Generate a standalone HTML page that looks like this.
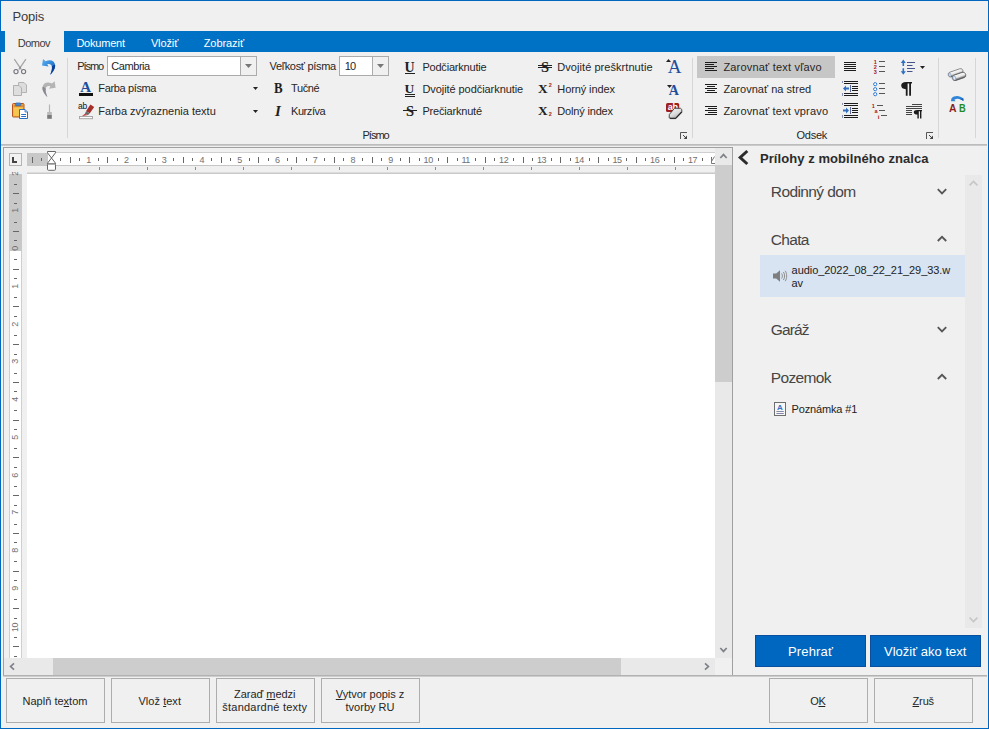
<!DOCTYPE html>
<html lang="sk"><head><meta charset="utf-8"><title>Popis</title>
<style>
html,body{margin:0;padding:0;}
body{width:989px;height:729px;overflow:hidden;background:#f0f0f0;font-family:'Liberation Sans', sans-serif;color:#262626;position:relative;}
#win div,#win span.t,#win svg{position:absolute;box-sizing:border-box;}
#win{position:absolute;left:0;top:0;width:989px;height:729px;overflow:hidden;}
span.t{white-space:nowrap;}
svg{overflow:visible;}
.btn{border:1px solid #adadad;background:#f0f0f0;}
u{text-decoration:underline;text-underline-offset:1px;}
</style></head><body><div id="win">
<div style="left:0px;top:0px;width:989px;height:729px;border:1px solid #0067c0;background:#f0f0f0;"></div>
<span class="t " id="t0" style="left:12.5px;top:9.600000000000001px;font-size:13px;line-height:13px;color:#3b3b3b;letter-spacing:-0.206px;">Popis</span>
<div style="left:0px;top:31px;width:989px;height:21px;background:#0072c6;"></div>
<div style="left:5px;top:31px;width:59px;height:21px;background:#f0f0f0;"></div>
<span class="t " id="t1" style="left:17.8px;top:38px;font-size:11px;line-height:11px;color:#3b3b3b;letter-spacing:-0.528px;">Domov</span>
<span class="t " id="t2" style="left:76.4px;top:38px;font-size:11px;line-height:11px;color:#fff;letter-spacing:-0.217px;">Dokument</span>
<span class="t " id="t3" style="left:150.9px;top:38px;font-size:11px;line-height:11px;color:#fff;letter-spacing:-0.111px;">Vložiť</span>
<span class="t " id="t4" style="left:203.7px;top:38px;font-size:11px;line-height:11px;color:#fff;letter-spacing:-0.064px;">Zobraziť</span>
<div style="left:1px;top:144px;width:986px;height:1px;background:#bcbcbc;"></div>
<div style="left:1px;top:145px;width:986px;height:1px;background:#cacaca;"></div>
<div style="left:67px;top:58px;width:1px;height:80px;background:#d6d6d6;"></div>
<div style="left:692px;top:58px;width:1px;height:80px;background:#d6d6d6;"></div>
<div style="left:938px;top:58px;width:1px;height:80px;background:#d6d6d6;"></div>
<div style="left:975px;top:58px;width:1px;height:80px;background:#d6d6d6;"></div>
<svg style="left:12px;top:58px" width="16" height="16" viewBox="0 0 16 16">
<path d="M2.3 1.2L9.4 11.6M13.9 1.2L6.8 11.6" stroke="#a4a4a4" stroke-width="1.2" fill="none"/>
<circle cx="4" cy="13.6" r="2.1" fill="none" stroke="#74747e" stroke-width="1.1"/>
<circle cx="11.6" cy="13.6" r="2.1" fill="none" stroke="#74747e" stroke-width="1.1"/>
<circle cx="8.1" cy="9.6" r=".9" fill="#888"/></svg>
<svg style="left:40px;top:58px" width="17" height="17" viewBox="0 0 17 17"><defs><linearGradient id="ung" x1="0" y1="0" x2="1" y2="1"><stop offset="0" stop-color="#5fb0ee"/><stop offset=".5" stop-color="#2f86d8"/><stop offset="1" stop-color="#0d4aa0"/></linearGradient></defs>
<path d="M3 1L2 7.5L8.6 8.6L7.2 6.3C9.5 5.3 11.5 6.3 11.9 8.6C12.3 11 11.4 14 10.2 16.8C13.2 14 15.5 10.4 15.1 7C14.6 3 10.6 1.1 5.6 3.3Z" fill="url(#ung)"/><path d="M11.9 8.6C12.3 11 11.4 14 10.2 16.8C13.2 14 15.5 10.4 15.1 7C14.3 6.6 12.8 7.2 11.9 8.6Z" fill="#0b3f98"/></svg>
<svg style="left:12px;top:80px" width="16" height="16" viewBox="0 0 16 16">
<path d="M6.5 2.5H12L14.5 5V12.5H6.5Z" fill="#dcdcdc" stroke="#b4b4b4"/>
<path d="M1.5 5.5H7L9.5 8V15.5H1.5Z" fill="#dedede" stroke="#b0b0b0"/></svg>
<svg style="left:40px;top:80px" width="18" height="17" viewBox="0 0 18 17"><g transform="translate(17.6 .2) scale(-1 1)"><path d="M3 1L2 7.5L8.6 8.6L7.2 6.3C9.5 5.3 11.5 6.3 11.9 8.6C12.3 11 11.4 14 10.2 16.8C13.2 14 15.5 10.4 15.1 7C14.6 3 10.6 1.1 5.6 3.3Z" fill="#b4b4b4"/><path d="M11.9 8.6C12.3 11 11.4 14 10.2 16.8C13.2 14 15.5 10.4 15.1 7C14.3 6.6 12.8 7.2 11.9 8.6Z" fill="#8a8a94"/></g></svg>
<svg style="left:12px;top:102px" width="17" height="17" viewBox="0 0 17 17">
<rect x=".5" y="1.5" width="11.5" height="13.5" rx="1" fill="#f3b63a" stroke="#b5541e"/>
<rect x="1.6" y="2.6" width="9.3" height="2.6" fill="#d98a3a"/>
<rect x="2" y="5.4" width="8.5" height="8.4" fill="#f6c750"/>
<rect x="3.6" y=".9" width="5.2" height="2.8" rx=".8" fill="#4b86c9" stroke="#2a5fa5" stroke-width=".6"/>
<path d="M7.5 7.5H13L15.5 10V16.5H7.5Z" fill="#fff" stroke="#2b6fc0"/>
<path d="M13 7.5V10H15.5" fill="#cfe0f6" stroke="#2b6fc0" stroke-width=".8"/>
<path d="M9.2 12.5H14M9.2 14.5H14" stroke="#2b6fc0"/></svg>
<svg style="left:40px;top:102px" width="16" height="17" viewBox="0 0 16 17">
<path d="M9.5 2.5V10" stroke="#b5b5b5" stroke-width="1.2"/>
<rect x="7.2" y="10" width="4.6" height="3" fill="#b9b9b9"/>
<rect x="7.2" y="13" width="4.6" height="3.8" fill="#7a7a7a"/></svg>
<span class="t " id="t5" style="left:77.2px;top:61px;font-size:11px;line-height:11px;letter-spacing:-1.035px;">Písmo</span>
<div style="left:107px;top:56px;width:150px;height:20px;border:1px solid #ababab;background:#fff;"></div>
<div style="left:240px;top:57px;width:16px;height:18px;border-left:1px solid #ababab;background:#f0f0f0;"></div>
<svg style="left:245px;top:64px" width="7" height="4" viewBox="0 0 7 4"><path d="M0 0H7L3.5 4Z" fill="#777"/></svg>
<span class="t " id="t6" style="left:111.3px;top:61px;font-size:11px;line-height:11px;letter-spacing:-0.440px;">Cambria</span>
<span class="t " id="t7" style="left:269.5px;top:61px;font-size:11px;line-height:11px;letter-spacing:-0.309px;">Veľkosť písma</span>
<div style="left:339px;top:56px;width:50px;height:20px;border:1px solid #ababab;background:#fff;"></div>
<div style="left:372px;top:57px;width:16px;height:18px;border-left:1px solid #ababab;background:#f0f0f0;"></div>
<svg style="left:377px;top:64px" width="7" height="4" viewBox="0 0 7 4"><path d="M0 0H7L3.5 4Z" fill="#777"/></svg>
<span class="t " id="t8" style="left:344.8px;top:61px;font-size:11px;line-height:11px;letter-spacing:-0.969px;">10</span>
<span class="t " id="t9" style="left:80.2px;top:80px;font-size:15px;line-height:15px;font-weight:700;color:#1f4e9c;font-family:'Liberation Serif', serif;">A</span><div style="left:79px;top:93px;width:14px;height:3px;background:#111;"></div>
<span class="t " id="t10" style="left:98.3px;top:83px;font-size:11px;line-height:11px;letter-spacing:-0.360px;">Farba písma</span>
<svg style="left:253px;top:87px" width="5" height="3" viewBox="0 0 5 3"><path d="M0 0H5L2.5 3Z" fill="#222"/></svg>
<span class="t " id="t11" style="left:78.1px;top:102.2px;font-size:8.5px;line-height:8.5px;color:#111;letter-spacing:-.3px;">ab</span><svg style="left:78px;top:102px" width="17" height="17" viewBox="0 0 17 17">
<path d="M12.4 2.5L16.2 4.9L11.8 11.3L8 9.2Z" fill="#a5302a"/>
<path d="M8 9.2L11.8 11.3L10 13.1L6.8 11.9Z" fill="#6b6b6b"/>
<path d="M6.8 11.9L10 13.1L4 14Z" fill="#b02a24"/>
<rect x="1.5" y="14.5" width="13" height="2.2" fill="#fff" stroke="#a8a8a8"/></svg>
<span class="t " id="t12" style="left:98.3px;top:106px;font-size:11px;line-height:11px;letter-spacing:0.004px;">Farba zvýraznenia textu</span>
<svg style="left:253px;top:110px" width="5" height="3" viewBox="0 0 5 3"><path d="M0 0H5L2.5 3Z" fill="#222"/></svg>
<span class="t " id="t13" style="left:273.6px;top:81px;font-size:15px;line-height:15px;font-weight:700;color:#1e1e1e;font-family:'Liberation Serif', serif;transform:scaleX(.86);transform-origin:0 0;">B</span>
<span class="t " id="t14" style="left:291px;top:83px;font-size:11px;line-height:11px;letter-spacing:-0.373px;">Tučné</span>
<span class="t " id="t15" style="left:275px;top:104px;font-size:15px;line-height:15px;font-weight:700;color:#1e1e1e;font-family:'Liberation Serif', serif;font-style:italic;">I</span>
<span class="t " id="t16" style="left:291px;top:106px;font-size:11px;line-height:11px;letter-spacing:-0.428px;">Kurzíva</span>
<span class="t " id="t17" style="left:404.6px;top:60px;font-size:14px;line-height:14px;font-weight:700;color:#222;font-family:'Liberation Serif', serif;margin-top:.7px;">U</span><div style="left:405px;top:73px;width:10px;height:1px;background:#222;"></div>
<span class="t " id="t18" style="left:422.4px;top:62px;font-size:11px;line-height:11px;letter-spacing:-0.204px;">Podčiarknutie</span>
<span class="t " id="t19" style="left:404.6px;top:81.5px;font-size:13.5px;line-height:13.5px;font-weight:700;color:#222;font-family:'Liberation Serif', serif;">U</span><div style="left:405px;top:94px;width:10px;height:1px;background:#222;"></div><div style="left:405px;top:96px;width:10px;height:1px;background:#222;"></div>
<span class="t " id="t20" style="left:422.4px;top:84px;font-size:11px;line-height:11px;letter-spacing:-0.063px;">Dvojité podčiarknutie</span>
<span class="t " id="t21" style="left:406px;top:103.5px;font-size:14.5px;line-height:14.5px;font-weight:700;color:#222;font-family:'Liberation Serif', serif;">S</span><div style="left:403px;top:110px;width:14px;height:1px;background:#222;"></div>
<span class="t " id="t22" style="left:422.4px;top:106px;font-size:11px;line-height:11px;letter-spacing:-0.188px;">Prečiarknuté</span>
<span class="t " id="t23" style="left:541px;top:59.5px;font-size:14.5px;line-height:14.5px;font-weight:700;color:#222;font-family:'Liberation Serif', serif;">S</span><div style="left:538px;top:65px;width:14px;height:1px;background:#222;"></div><div style="left:538px;top:67px;width:14px;height:1px;background:#222;"></div>
<span class="t " id="t24" style="left:557.3px;top:62px;font-size:11px;line-height:11px;letter-spacing:0.057px;">Dvojité preškrtnutie</span>
<span class="t " id="t25" style="left:538.2px;top:83.5px;font-size:11.5px;line-height:11.5px;font-weight:700;color:#222;font-family:'Liberation Serif', serif;transform:scaleX(1.16);transform-origin:0 0;">X</span><span class="t " id="t26" style="left:548.8px;top:83.2px;font-size:5.5px;line-height:5.5px;font-weight:700;color:#a02020;">2</span>
<span class="t " id="t27" style="left:557.3px;top:84px;font-size:11px;line-height:11px;letter-spacing:-0.109px;">Horný index</span>
<span class="t " id="t28" style="left:538.2px;top:105.5px;font-size:11.5px;line-height:11.5px;font-weight:700;color:#222;font-family:'Liberation Serif', serif;transform:scaleX(1.16);transform-origin:0 0;">X</span><span class="t " id="t29" style="left:548.8px;top:112.1px;font-size:5.5px;line-height:5.5px;font-weight:700;color:#a02020;">2</span>
<span class="t " id="t30" style="left:557.3px;top:106px;font-size:11px;line-height:11px;letter-spacing:-0.172px;">Dolný index</span>
<span class="t " id="t31" style="left:667.8px;top:57px;font-size:19px;line-height:19px;color:#1f4e9c;font-family:'Liberation Serif', serif;">A</span><svg style="left:666px;top:59px" width="5" height="3" viewBox="0 0 5 3"><path d="M0 3H5L2.5 0Z" fill="#222"/></svg>
<span class="t " id="t32" style="left:668.8px;top:84px;font-size:14px;line-height:14px;font-weight:700;color:#1f4e9c;font-family:'Liberation Serif', serif;">A</span><svg style="left:667px;top:85px" width="5" height="3" viewBox="0 0 5 3"><path d="M0 0H5L2.5 3Z" fill="#222"/></svg>
<svg style="left:665px;top:102px" width="18" height="17" viewBox="0 0 18 17"><rect x="1" y="1" width="13.2" height="9" rx="1.6" fill="#9e1f1f"/></svg><span class="t " id="t33" style="left:667.8px;top:103.4px;font-size:9px;line-height:9px;font-weight:700;color:#fff;letter-spacing:-.3px;">ab</span><svg style="left:665px;top:102px" width="18" height="17" viewBox="0 0 18 17"><defs><linearGradient id="erg" x1="0" y1="0" x2=".6" y2="1"><stop offset="0" stop-color="#f4f4f4"/><stop offset=".6" stop-color="#dcdcdc"/><stop offset="1" stop-color="#a8a8a8"/></linearGradient></defs><path d="M4.3 12.5L9.5 6.3H15.5L16.8 7.5V10.3L10.8 16.6H5.2L4.2 15.5Z" fill="url(#erg)" stroke="#3a3a3a" stroke-width=".9" stroke-linejoin="round"/><path d="M4.6 15.6L5.4 16.3H10.6L16.6 10" fill="none" stroke="#222" stroke-width="1.1"/></svg>
<span class="t " id="t34" style="left:362.5px;top:130px;font-size:11px;line-height:11px;letter-spacing:-0.996px;">Písmo</span>
<svg style="left:680px;top:132px" width="7" height="7" viewBox="0 0 7 7"><path d="M.5 7V.5H7" fill="none" stroke="#555"/><path d="M7 3.6V7H3.6Z" fill="#444"/><path d="M3 3L6 6" stroke="#444" stroke-width="1"/></svg>
<div style="left:697px;top:56px;width:138px;height:22px;background:#c6c6c6;"></div>
<svg style="left:705px;top:62px" width="12" height="9" viewBox="0 0 12 9"><rect x="0" y="0" width="12" height="1" fill="#1c1c1c"/><rect x="0" y="2" width="9" height="1" fill="#1c1c1c"/><rect x="0" y="4" width="12" height="1" fill="#1c1c1c"/><rect x="0" y="6" width="9" height="1" fill="#1c1c1c"/><rect x="0" y="8" width="12" height="1" fill="#1c1c1c"/></svg>
<span class="t " id="t35" style="left:723.4px;top:62px;font-size:11px;line-height:11px;letter-spacing:0.196px;">Zarovnať text vľavo</span>
<svg style="left:705px;top:84px" width="12" height="9" viewBox="0 0 12 9"><rect x="0" y="0" width="12" height="1" fill="#1c1c1c"/><rect x="2" y="2" width="8" height="1" fill="#1c1c1c"/><rect x="0" y="4" width="12" height="1" fill="#1c1c1c"/><rect x="2" y="6" width="8" height="1" fill="#1c1c1c"/><rect x="0" y="8" width="12" height="1" fill="#1c1c1c"/></svg>
<span class="t " id="t36" style="left:723.4px;top:84px;font-size:11px;line-height:11px;letter-spacing:0.030px;">Zarovnať na stred</span>
<svg style="left:705px;top:106px" width="12" height="9" viewBox="0 0 12 9"><rect x="0" y="0" width="12" height="1" fill="#1c1c1c"/><rect x="3" y="2" width="9" height="1" fill="#1c1c1c"/><rect x="0" y="4" width="12" height="1" fill="#1c1c1c"/><rect x="3" y="6" width="9" height="1" fill="#1c1c1c"/><rect x="0" y="8" width="12" height="1" fill="#1c1c1c"/></svg>
<span class="t " id="t37" style="left:723.4px;top:106px;font-size:11px;line-height:11px;letter-spacing:0.173px;">Zarovnať text vpravo</span>
<svg style="left:844px;top:62px" width="12" height="9" viewBox="0 0 12 9"><rect x="0" y="0" width="12" height="1" fill="#1c1c1c"/><rect x="0" y="2" width="12" height="1" fill="#1c1c1c"/><rect x="0" y="4" width="12" height="1" fill="#1c1c1c"/><rect x="0" y="6" width="12" height="1" fill="#1c1c1c"/><rect x="0" y="8" width="12" height="1" fill="#1c1c1c"/></svg>
<svg style="left:842px;top:80px" width="16" height="17" viewBox="0 0 16 17"><rect x="2" y="1" width="14" height="1" fill="#1c1c1c"/><rect x="2" y="3" width="14" height="1" fill="#1c1c1c"/><rect x="2" y="13" width="14" height="1" fill="#1c1c1c"/><rect x="2" y="15" width="14" height="1" fill="#1c1c1c"/><rect x="10" y="6" width="6" height="1" fill="#1c1c1c"/><rect x="10" y="8" width="6" height="1" fill="#1c1c1c"/><rect x="10" y="10" width="6" height="1" fill="#1c1c1c"/><rect x="8" y="5" width="1" height="7" fill="#5a6a9a"/><rect x="0" y="1" width="1" height="2" fill="#8a93b5"/><rect x="0" y="13" width="1" height="3" fill="#8a93b5"/><path d="M1 8.5L4 5.5V7.5H7V9.5H4V11.5Z" fill="#2f6fc4"/></svg>
<svg style="left:842px;top:102px" width="16" height="17" viewBox="0 0 16 17"><rect x="2" y="1" width="14" height="1" fill="#1c1c1c"/><rect x="2" y="3" width="14" height="1" fill="#1c1c1c"/><rect x="2" y="13" width="14" height="1" fill="#1c1c1c"/><rect x="2" y="15" width="14" height="1" fill="#1c1c1c"/><rect x="10" y="6" width="6" height="1" fill="#1c1c1c"/><rect x="10" y="8" width="6" height="1" fill="#1c1c1c"/><rect x="10" y="10" width="6" height="1" fill="#1c1c1c"/><rect x="8" y="5" width="1" height="7" fill="#5a6a9a"/><rect x="0" y="1" width="1" height="2" fill="#8a93b5"/><rect x="0" y="13" width="1" height="3" fill="#8a93b5"/><path d="M7 8.5L4 5.5V7.5H1V9.5H4V11.5Z" fill="#2f6fc4"/></svg>
<svg style="left:872px;top:58px" width="14" height="16" viewBox="0 0 14 16"><rect x="7" y="3" width="6" height="1" fill="#555"/><rect x="7" y="8" width="6" height="1" fill="#555"/><rect x="7" y="13" width="6" height="1" fill="#555"/></svg><span class="t " id="t38" style="left:873.8px;top:60.1px;font-size:5.5px;line-height:5.5px;font-weight:700;color:#a02020;">1</span><span class="t " id="t39" style="left:873.8px;top:65.1px;font-size:5.5px;line-height:5.5px;font-weight:700;color:#a02020;">2</span><span class="t " id="t40" style="left:873.8px;top:70.1px;font-size:5.5px;line-height:5.5px;font-weight:700;color:#a02020;">3</span>
<svg style="left:872px;top:80px" width="14" height="17" viewBox="0 0 14 17"><circle cx="3.2" cy="4.2" r="1.6" fill="#fff" stroke="#2f7ad4" stroke-width="1"/><rect x="7" y="3.0" width="6" height="1" fill="#555"/><circle cx="3.2" cy="9.2" r="1.6" fill="#fff" stroke="#2f7ad4" stroke-width="1"/><rect x="7" y="8.0" width="6" height="1" fill="#555"/><circle cx="3.2" cy="14.2" r="1.6" fill="#fff" stroke="#2f7ad4" stroke-width="1"/><rect x="7" y="13.0" width="6" height="1" fill="#555"/></svg>
<svg style="left:871px;top:102px" width="16" height="17" viewBox="0 0 16 17"><rect x="6" y="3" width="6" height="1" fill="#555"/><rect x="8" y="8" width="6" height="1" fill="#555"/><rect x="10" y="13" width="6" height="1" fill="#555"/></svg><span class="t " id="t41" style="left:871.8px;top:103.5px;font-size:5.5px;line-height:5.5px;font-weight:700;color:#a02020;">1</span><span class="t " id="t42" style="left:874.4px;top:109.0px;font-size:5.5px;line-height:5.5px;font-weight:700;color:#a02020;">a</span><span class="t " id="t43" style="left:877.8px;top:114.4px;font-size:6px;line-height:6px;font-weight:700;color:#a02020;">i</span>
<svg style="left:900px;top:58px" width="16" height="17" viewBox="0 0 16 17"><path d="M3.3 1.5L5.8 5H4.1V8H2.5V5H.8Z" fill="#2f6fc4"/><path d="M3.3 16.7L5.8 13.2H4.1V10.3H2.5V13.2H.8Z" fill="#2f6fc4"/>
<rect x="7" y="4" width="8" height="1" fill="#44548c"/><rect x="7" y="7" width="5.5" height="1" fill="#44548c"/>
<rect x="7" y="10" width="8" height="1" fill="#44548c"/><rect x="7" y="13" width="5.5" height="1" fill="#44548c"/></svg>
<svg style="left:920px;top:66px" width="5" height="3" viewBox="0 0 5 3"><path d="M0 0H5L2.5 3Z" fill="#222"/></svg>
<svg style="left:900px;top:80px" width="13" height="16" viewBox="0 0 13 16"><path d="M6 2H12V3.6H11V15.8H9.2V3.6H7.6V15.8H5.8V9.2C3 9.2 1.2 7.8 1.2 5.6C1.2 3.4 3 2 6 2Z" fill="#1c1c1c"/></svg>
<svg style="left:905px;top:102px" width="18" height="17" viewBox="0 0 18 17"><rect x="7" y="2" width="10" height="1" fill="#444"/><rect x="1" y="4" width="16" height="1" fill="#444"/><rect x="1" y="6" width="16" height="1" fill="#444"/>
<rect x="1" y="8" width="6" height="1" fill="#444"/><rect x="1" y="10" width="6" height="1" fill="#444"/><rect x="1" y="12" width="6" height="1" fill="#444"/>
<path d="M12 8H17V9.2H16.4V16.6H15V9.2H13.8V16.6H12.4V12.6C10.2 12.6 8.8 11.8 8.8 10.3C8.8 8.8 10.2 8 12 8Z" fill="#1c1c1c"/></svg>
<span class="t " id="t44" style="left:796.5px;top:130px;font-size:11px;line-height:11px;letter-spacing:-0.259px;">Odsek</span>
<svg style="left:926px;top:132px" width="7" height="7" viewBox="0 0 7 7"><path d="M.5 7V.5H7" fill="none" stroke="#555"/><path d="M7 3.6V7H3.6Z" fill="#444"/><path d="M3 3L6 6" stroke="#444" stroke-width="1"/></svg>
<svg style="left:948px;top:67.2px" width="17" height="17" viewBox="0 0 17 17"><defs><linearGradient id="bng" x1="0" y1="0" x2="0" y2="1"><stop offset="0" stop-color="#fdfdfd"/><stop offset=".55" stop-color="#e6e6e6"/><stop offset="1" stop-color="#4a4a4a"/></linearGradient></defs>
<g transform="rotate(-19 8.5 8.5)">
<rect x=".8" y="3.2" width="15.4" height="5" rx="2.5" fill="url(#bng)" stroke="#6a6a6a" stroke-width=".7"/>
<rect x="3.6" y="7.4" width="14" height="5.6" rx="2.8" fill="url(#bng)" stroke="#555" stroke-width=".7"/>
<ellipse cx="2.4" cy="5.7" rx="1.1" ry="2" fill="#d6e8fb" stroke="#6a7a9a" stroke-width=".5"/>
<ellipse cx="5.6" cy="10.2" rx="1.4" ry="2.3" fill="#d9ebff" stroke="#6a7a9a" stroke-width=".5"/>
</g></svg>
<svg style="left:948px;top:95px" width="17" height="8" viewBox="0 0 17 8"><path d="M3 6.2L3.4 3.4C6.4 .2 11.6 .2 15.4 3.6V6C12 3.4 8.6 3.2 6.4 4.8L7.6 6.3Z" fill="#2f86d8"/><path d="M15.4 3.6V6C14 5 12.6 4.4 11.4 4.1C12.8 3.4 14.2 3.2 15.4 3.6Z" fill="#1a5fb4"/></svg><span class="t " id="t45" style="left:948.9px;top:103px;font-size:11px;line-height:11px;font-weight:700;color:#8b1f1f;transform:scaleX(.95);transform-origin:0 0;">A</span><span class="t " id="t46" style="left:958.8px;top:103px;font-size:11px;line-height:11px;font-weight:700;color:#1f8b1f;transform:scaleX(.84);transform-origin:0 0;">B</span>
<div style="left:3px;top:147px;width:730px;height:529px;border:1px solid #a0a0a0;border-bottom:none;background:#f0f0f0;"></div>
<div style="left:3px;top:675px;width:984px;height:1px;background:#b2b2b2;"></div>
<div style="left:3px;top:676px;width:984px;height:1px;background:#cdcdcd;"></div>
<div style="left:27px;top:174px;width:688px;height:484px;background:#fff;"></div>
<div style="left:9px;top:153px;width:13px;height:13px;border:1px solid #b4b4b4;background:#f2f2f2;"></div>
<div style="left:12px;top:157px;width:2px;height:6px;background:#444;"></div>
<div style="left:12px;top:161px;width:5px;height:2px;background:#444;"></div>
<div style="left:27px;top:153px;width:688px;height:13px;background:#fff;"></div>
<div style="left:27px;top:153px;width:21px;height:13px;background:#c8c8c8;"></div>
<div style="left:48px;top:152px;width:667px;height:1px;background:#cfcfcf;"></div>
<div style="left:27px;top:165px;width:688px;height:1px;background:#c6c6c6;"></div>
<div style="left:27px;top:167px;width:688px;height:6px;background:#f0f0f0;"></div>
<div style="left:27px;top:172px;width:688px;height:1px;background:#dcdcdc;"></div>
<div style="left:27px;top:173px;width:688px;height:1px;background:#c9c9c9;"></div>
<svg style="left:27px;top:153px" width="688" height="20" viewBox="0 0 688 20"><rect x="5" y="4" width="1" height="6" fill="#666"/><rect x="14" y="5" width="1" height="3" fill="#666"/><rect x="33" y="5" width="1" height="3" fill="#666"/><rect x="43" y="4" width="1" height="6" fill="#666"/><rect x="52" y="5" width="1" height="3" fill="#666"/><rect x="71" y="5" width="1" height="3" fill="#666"/><rect x="80" y="4" width="1" height="6" fill="#666"/><rect x="90" y="5" width="1" height="3" fill="#666"/><rect x="109" y="5" width="1" height="3" fill="#666"/><rect x="118" y="4" width="1" height="6" fill="#666"/><rect x="128" y="5" width="1" height="3" fill="#666"/><rect x="146" y="5" width="1" height="3" fill="#666"/><rect x="156" y="4" width="1" height="6" fill="#666"/><rect x="165" y="5" width="1" height="3" fill="#666"/><rect x="184" y="5" width="1" height="3" fill="#666"/><rect x="194" y="4" width="1" height="6" fill="#666"/><rect x="203" y="5" width="1" height="3" fill="#666"/><rect x="222" y="5" width="1" height="3" fill="#666"/><rect x="231" y="4" width="1" height="6" fill="#666"/><rect x="241" y="5" width="1" height="3" fill="#666"/><rect x="260" y="5" width="1" height="3" fill="#666"/><rect x="269" y="4" width="1" height="6" fill="#666"/><rect x="279" y="5" width="1" height="3" fill="#666"/><rect x="297" y="5" width="1" height="3" fill="#666"/><rect x="307" y="4" width="1" height="6" fill="#666"/><rect x="316" y="5" width="1" height="3" fill="#666"/><rect x="335" y="5" width="1" height="3" fill="#666"/><rect x="345" y="4" width="1" height="6" fill="#666"/><rect x="354" y="5" width="1" height="3" fill="#666"/><rect x="373" y="5" width="1" height="3" fill="#666"/><rect x="382" y="4" width="1" height="6" fill="#666"/><rect x="392" y="5" width="1" height="3" fill="#666"/><rect x="411" y="5" width="1" height="3" fill="#666"/><rect x="420" y="4" width="1" height="6" fill="#666"/><rect x="430" y="5" width="1" height="3" fill="#666"/><rect x="448" y="5" width="1" height="3" fill="#666"/><rect x="458" y="4" width="1" height="6" fill="#666"/><rect x="467" y="5" width="1" height="3" fill="#666"/><rect x="486" y="5" width="1" height="3" fill="#666"/><rect x="496" y="4" width="1" height="6" fill="#666"/><rect x="505" y="5" width="1" height="3" fill="#666"/><rect x="524" y="5" width="1" height="3" fill="#666"/><rect x="533" y="4" width="1" height="6" fill="#666"/><rect x="543" y="5" width="1" height="3" fill="#666"/><rect x="562" y="5" width="1" height="3" fill="#666"/><rect x="571" y="4" width="1" height="6" fill="#666"/><rect x="581" y="5" width="1" height="3" fill="#666"/><rect x="599" y="5" width="1" height="3" fill="#666"/><rect x="609" y="4" width="1" height="6" fill="#666"/><rect x="618" y="5" width="1" height="3" fill="#666"/><rect x="637" y="5" width="1" height="3" fill="#666"/><rect x="647" y="4" width="1" height="6" fill="#666"/><rect x="656" y="5" width="1" height="3" fill="#666"/><rect x="675" y="5" width="1" height="3" fill="#666"/><rect x="684" y="4" width="1" height="6" fill="#666"/><rect x="72" y="14" width="1" height="3" fill="#8c8c8c"/><rect x="120" y="14" width="1" height="3" fill="#8c8c8c"/><rect x="168" y="14" width="1" height="3" fill="#8c8c8c"/><rect x="216" y="14" width="1" height="3" fill="#8c8c8c"/><rect x="264" y="14" width="1" height="3" fill="#8c8c8c"/><rect x="312" y="14" width="1" height="3" fill="#8c8c8c"/><rect x="360" y="14" width="1" height="3" fill="#8c8c8c"/><rect x="408" y="14" width="1" height="3" fill="#8c8c8c"/><rect x="456" y="14" width="1" height="3" fill="#8c8c8c"/><rect x="504" y="14" width="1" height="3" fill="#8c8c8c"/><rect x="552" y="14" width="1" height="3" fill="#8c8c8c"/><rect x="600" y="14" width="1" height="3" fill="#8c8c8c"/><rect x="648" y="14" width="1" height="3" fill="#8c8c8c"/></svg>
<span class="t " id="t47" style="left:86.2px;top:155.5px;font-size:9px;line-height:9px;color:#707070;letter-spacing:-.4px;">1</span>
<span class="t " id="t48" style="left:124.0px;top:155.5px;font-size:9px;line-height:9px;color:#707070;letter-spacing:-.4px;">2</span>
<span class="t " id="t49" style="left:161.7px;top:155.5px;font-size:9px;line-height:9px;color:#707070;letter-spacing:-.4px;">3</span>
<span class="t " id="t50" style="left:199.5px;top:155.5px;font-size:9px;line-height:9px;color:#707070;letter-spacing:-.4px;">4</span>
<span class="t " id="t51" style="left:237.2px;top:155.5px;font-size:9px;line-height:9px;color:#707070;letter-spacing:-.4px;">5</span>
<span class="t " id="t52" style="left:275.0px;top:155.5px;font-size:9px;line-height:9px;color:#707070;letter-spacing:-.4px;">6</span>
<span class="t " id="t53" style="left:312.7px;top:155.5px;font-size:9px;line-height:9px;color:#707070;letter-spacing:-.4px;">7</span>
<span class="t " id="t54" style="left:350.5px;top:155.5px;font-size:9px;line-height:9px;color:#707070;letter-spacing:-.4px;">8</span>
<span class="t " id="t55" style="left:388.2px;top:155.5px;font-size:9px;line-height:9px;color:#707070;letter-spacing:-.4px;">9</span>
<span class="t " id="t56" style="left:423.6px;top:155.5px;font-size:9px;line-height:9px;color:#707070;letter-spacing:-.4px;">10</span>
<span class="t " id="t57" style="left:461.4px;top:155.5px;font-size:9px;line-height:9px;color:#707070;letter-spacing:-.4px;">11</span>
<span class="t " id="t58" style="left:499.1px;top:155.5px;font-size:9px;line-height:9px;color:#707070;letter-spacing:-.4px;">12</span>
<span class="t " id="t59" style="left:536.9px;top:155.5px;font-size:9px;line-height:9px;color:#707070;letter-spacing:-.4px;">13</span>
<span class="t " id="t60" style="left:574.6px;top:155.5px;font-size:9px;line-height:9px;color:#707070;letter-spacing:-.4px;">14</span>
<span class="t " id="t61" style="left:612.4px;top:155.5px;font-size:9px;line-height:9px;color:#707070;letter-spacing:-.4px;">15</span>
<span class="t " id="t62" style="left:650.1px;top:155.5px;font-size:9px;line-height:9px;color:#707070;letter-spacing:-.4px;">16</span>
<span class="t " id="t63" style="left:687.9px;top:155.5px;font-size:9px;line-height:9px;color:#707070;letter-spacing:-.4px;">17</span>
<svg style="left:708px;top:156px" width="8" height="8" viewBox="0 0 8 8"><path d="M6.5 0.5L3.5 5.5M3.5 2V7.5H8" fill="none" stroke="#777" stroke-width="1"/></svg>
<svg style="left:47px;top:151px" width="9" height="20" viewBox="0 0 9 20"><path d="M.5 .5H8.5V1.8L4.5 7L.5 1.8Z" fill="#fff" stroke="#666"/>
<path d="M4.5 7L8.5 12.2V13H.5V12.2Z" fill="#fff" stroke="#666"/>
<rect x=".5" y="13" width="8" height="6.3" rx="1" fill="#fff" stroke="#666"/></svg>
<div style="left:9px;top:174px;width:13px;height:484px;background:#fff;border-left:1px solid #cfcfcf;border-right:1px solid #cfcfcf;"></div>
<div style="left:9px;top:174px;width:13px;height:76.5px;background:#c8c8c8;"></div>
<svg style="left:9px;top:174px" width="13" height="484" viewBox="0 0 13 484"><rect x="5" y="10" width="3" height="1" fill="#666"/><rect x="4" y="19" width="6" height="1" fill="#666"/><rect x="5" y="29" width="3" height="1" fill="#666"/><rect x="5" y="48" width="3" height="1" fill="#666"/><rect x="4" y="57" width="6" height="1" fill="#666"/><rect x="5" y="66" width="3" height="1" fill="#666"/><rect x="5" y="85" width="3" height="1" fill="#666"/><rect x="4" y="95" width="6" height="1" fill="#666"/><rect x="5" y="104" width="3" height="1" fill="#666"/><rect x="5" y="123" width="3" height="1" fill="#666"/><rect x="4" y="132" width="6" height="1" fill="#666"/><rect x="5" y="142" width="3" height="1" fill="#666"/><rect x="5" y="161" width="3" height="1" fill="#666"/><rect x="4" y="170" width="6" height="1" fill="#666"/><rect x="5" y="180" width="3" height="1" fill="#666"/><rect x="5" y="199" width="3" height="1" fill="#666"/><rect x="4" y="208" width="6" height="1" fill="#666"/><rect x="5" y="217" width="3" height="1" fill="#666"/><rect x="5" y="236" width="3" height="1" fill="#666"/><rect x="4" y="246" width="6" height="1" fill="#666"/><rect x="5" y="255" width="3" height="1" fill="#666"/><rect x="5" y="274" width="3" height="1" fill="#666"/><rect x="4" y="283" width="6" height="1" fill="#666"/><rect x="5" y="293" width="3" height="1" fill="#666"/><rect x="5" y="312" width="3" height="1" fill="#666"/><rect x="4" y="321" width="6" height="1" fill="#666"/><rect x="5" y="331" width="3" height="1" fill="#666"/><rect x="5" y="350" width="3" height="1" fill="#666"/><rect x="4" y="359" width="6" height="1" fill="#666"/><rect x="5" y="368" width="3" height="1" fill="#666"/><rect x="5" y="387" width="3" height="1" fill="#666"/><rect x="4" y="397" width="6" height="1" fill="#666"/><rect x="5" y="406" width="3" height="1" fill="#666"/><rect x="5" y="425" width="3" height="1" fill="#666"/><rect x="4" y="434" width="6" height="1" fill="#666"/><rect x="5" y="444" width="3" height="1" fill="#666"/><rect x="5" y="463" width="3" height="1" fill="#666"/><rect x="4" y="472" width="6" height="1" fill="#666"/><rect x="5" y="482" width="3" height="1" fill="#666"/></svg>
<span class="t " id="t64" style="left:0px;top:-7px;font-size:9px;line-height:9px;color:#707070;letter-spacing:-.4px;left:13.2px;top:168.5px;width:4.6px;text-align:center;transform:rotate(-90deg);transform-origin:50% 50%;">2</span>
<span class="t " id="t65" style="left:0px;top:-7px;font-size:9px;line-height:9px;color:#707070;letter-spacing:-.4px;left:13.2px;top:206.3px;width:4.6px;text-align:center;transform:rotate(-90deg);transform-origin:50% 50%;">1</span>
<span class="t " id="t66" style="left:0px;top:-7px;font-size:9px;line-height:9px;color:#707070;letter-spacing:-.4px;left:13.2px;top:244.0px;width:4.6px;text-align:center;transform:rotate(-90deg);transform-origin:50% 50%;">0</span>
<span class="t " id="t67" style="left:0px;top:-7px;font-size:9px;line-height:9px;color:#707070;letter-spacing:-.4px;left:13.2px;top:281.7px;width:4.6px;text-align:center;transform:rotate(-90deg);transform-origin:50% 50%;">1</span>
<span class="t " id="t68" style="left:0px;top:-7px;font-size:9px;line-height:9px;color:#707070;letter-spacing:-.4px;left:13.2px;top:319.5px;width:4.6px;text-align:center;transform:rotate(-90deg);transform-origin:50% 50%;">2</span>
<span class="t " id="t69" style="left:0px;top:-7px;font-size:9px;line-height:9px;color:#707070;letter-spacing:-.4px;left:13.2px;top:357.2px;width:4.6px;text-align:center;transform:rotate(-90deg);transform-origin:50% 50%;">3</span>
<span class="t " id="t70" style="left:0px;top:-7px;font-size:9px;line-height:9px;color:#707070;letter-spacing:-.4px;left:13.2px;top:395.0px;width:4.6px;text-align:center;transform:rotate(-90deg);transform-origin:50% 50%;">4</span>
<span class="t " id="t71" style="left:0px;top:-7px;font-size:9px;line-height:9px;color:#707070;letter-spacing:-.4px;left:13.2px;top:432.7px;width:4.6px;text-align:center;transform:rotate(-90deg);transform-origin:50% 50%;">5</span>
<span class="t " id="t72" style="left:0px;top:-7px;font-size:9px;line-height:9px;color:#707070;letter-spacing:-.4px;left:13.2px;top:470.5px;width:4.6px;text-align:center;transform:rotate(-90deg);transform-origin:50% 50%;">6</span>
<span class="t " id="t73" style="left:0px;top:-7px;font-size:9px;line-height:9px;color:#707070;letter-spacing:-.4px;left:13.2px;top:508.2px;width:4.6px;text-align:center;transform:rotate(-90deg);transform-origin:50% 50%;">7</span>
<span class="t " id="t74" style="left:0px;top:-7px;font-size:9px;line-height:9px;color:#707070;letter-spacing:-.4px;left:13.2px;top:546.0px;width:4.6px;text-align:center;transform:rotate(-90deg);transform-origin:50% 50%;">8</span>
<span class="t " id="t75" style="left:0px;top:-7px;font-size:9px;line-height:9px;color:#707070;letter-spacing:-.4px;left:13.2px;top:583.7px;width:4.6px;text-align:center;transform:rotate(-90deg);transform-origin:50% 50%;">9</span>
<span class="t " id="t76" style="left:0px;top:-7px;font-size:9px;line-height:9px;color:#707070;letter-spacing:-.4px;left:10.9px;top:622.8px;width:9.2px;text-align:center;transform:rotate(-90deg);transform-origin:50% 50%;">10</span>
<div style="left:4px;top:167px;width:22px;height:5px;background:#f0f0f0;"></div>
<div style="left:715px;top:148px;width:17px;height:510px;background:#e9e9e9;"></div>
<div style="left:715px;top:165px;width:17px;height:217px;background:#cdcdcd;"></div>
<svg style="left:720px;top:153px" width="7" height="6" viewBox="0 0 7 6"><path d="M.3 5L3.5 1.6L6.7 5" fill="none" stroke="#7f8088" stroke-width="1.7"/></svg>
<svg style="left:720px;top:647px" width="7" height="6" viewBox="0 0 7 6"><path d="M.3 1L3.5 4.4L6.7 1" fill="none" stroke="#7f8088" stroke-width="1.7"/></svg>
<div style="left:4px;top:658px;width:711px;height:17px;background:#e9e9e9;"></div>
<div style="left:53px;top:658px;width:568px;height:17px;background:#cdcdcd;"></div>
<svg style="left:9px;top:663px" width="6" height="7" viewBox="0 0 6 7"><path d="M5 .3L1.6 3.5L5 6.7" fill="none" stroke="#7f8088" stroke-width="1.7"/></svg>
<svg style="left:704px;top:663px" width="6" height="7" viewBox="0 0 6 7"><path d="M1 .3L4.4 3.5L1 6.7" fill="none" stroke="#7f8088" stroke-width="1.7"/></svg>
<div class="btn" style="left:6px;top:678px;width:99px;height:45px;"></div>
<span class="t " id="t77" style="left:22.5px;top:696px;font-size:11px;line-height:11px;letter-spacing:0.014px;">Naplň te<u>x</u>tom</span>
<div class="btn" style="left:111px;top:678px;width:99px;height:45px;"></div>
<span class="t " id="t78" style="left:138.5px;top:696px;font-size:11px;line-height:11px;letter-spacing:0.031px;">Vlož <u>t</u>ext</span>
<div class="btn" style="left:216px;top:678px;width:99px;height:45px;"></div>
<span class="t " id="t79" style="left:234px;top:689px;font-size:11px;line-height:11px;letter-spacing:-0.027px;">Zaraď <u>m</u>edzi</span>
<span class="t " id="t80" style="left:222.3px;top:702px;font-size:11px;line-height:11px;letter-spacing:0.229px;">štandardné texty</span>
<div class="btn" style="left:321px;top:678px;width:99px;height:45px;"></div>
<span class="t " id="t81" style="left:335.8px;top:689px;font-size:11px;line-height:11px;letter-spacing:-0.013px;"><u>V</u>ytvor popis z</span>
<span class="t " id="t82" style="left:345.5px;top:702px;font-size:11px;line-height:11px;letter-spacing:0.010px;">tvorby RU</span>
<div class="btn" style="left:769px;top:678px;width:99px;height:45px;"></div>
<span class="t " id="t83" style="left:810.3px;top:696px;font-size:11px;line-height:11px;letter-spacing:-0.453px;">O<u>K</u></span>
<div class="btn" style="left:874px;top:678px;width:99px;height:45px;"></div>
<span class="t " id="t84" style="left:912.5px;top:696px;font-size:11px;line-height:11px;letter-spacing:-0.129px;"><u>Z</u>ruš</span>
<svg style="left:738px;top:150px" width="11" height="15" viewBox="0 0 11 15"><path d="M9.3 1L2.2 7.5L9.3 14" fill="none" stroke="#2b2b2b" stroke-width="3"/></svg>
<span class="t " id="t85" style="left:760px;top:152.3px;font-size:13px;line-height:13px;font-weight:700;color:#2b2b2b;letter-spacing:0.063px;">Prílohy z mobilného znalca</span>
<span class="t " id="t86" style="left:770.8px;top:183.5px;font-size:15.5px;line-height:15.5px;color:#454545;letter-spacing:-0.594px;">Rodinný dom</span>
<svg style="left:937px;top:188px" width="10" height="7" viewBox="0 0 10 7"><path d="M.8 1.2L5 5.4L9.2 1.2" fill="none" stroke="#555" stroke-width="1.8"/></svg>
<span class="t " id="t87" style="left:770.8px;top:231.5px;font-size:15.5px;line-height:15.5px;color:#454545;letter-spacing:-0.675px;">Chata</span>
<svg style="left:937px;top:235px" width="10" height="7" viewBox="0 0 10 7"><path d="M.8 6L5 1.8L9.2 6" fill="none" stroke="#555" stroke-width="1.8"/></svg>
<div style="left:760px;top:255px;width:205px;height:42px;background:#d8e4f1;"></div>
<svg style="left:772px;top:269.3px" width="16" height="14" viewBox="0 0 16 14"><path d="M1 4.5H4.2L8 1.2V12.8L4.2 9.5H1Z" fill="#7e7e7e"/>
<path d="M9.6 4.4C10.6 5.8 10.6 8.2 9.6 9.6M11.4 3C13 5.2 13 8.8 11.4 11M13.2 1.8C15.2 4.6 15.2 9.4 13.2 12.2" fill="none" stroke="#868686" stroke-width=".9"/></svg>
<span class="t " id="t88" style="left:791.6px;top:265px;font-size:11px;line-height:11px;color:#222;letter-spacing:-0.062px;">audio_2022_08_22_21_29_33.w</span>
<span class="t " id="t89" style="left:791.6px;top:278px;font-size:11px;line-height:11px;color:#222;letter-spacing:-0.164px;">av</span>
<span class="t " id="t90" style="left:770.8px;top:321.5px;font-size:15.5px;line-height:15.5px;color:#454545;letter-spacing:-0.884px;">Garáž</span>
<svg style="left:937px;top:326px" width="10" height="7" viewBox="0 0 10 7"><path d="M.8 1.2L5 5.4L9.2 1.2" fill="none" stroke="#555" stroke-width="1.8"/></svg>
<span class="t " id="t91" style="left:770.8px;top:369.5px;font-size:15.5px;line-height:15.5px;color:#454545;letter-spacing:-0.659px;">Pozemok</span>
<svg style="left:937px;top:373px" width="10" height="7" viewBox="0 0 10 7"><path d="M.8 6L5 1.8L9.2 6" fill="none" stroke="#555" stroke-width="1.8"/></svg>
<svg style="left:773px;top:402px" width="13" height="14" viewBox="0 0 13 14"><rect x="1.5" y=".5" width="11" height="13" fill="#f6f6f6" stroke="#6e6e6e"/>
<path d="M3.4 11.5H10.8M3.4 9.5H10.8" stroke="#7a7aa0" stroke-width=".9"/></svg>
<span class="t " id="t92" style="left:777.1px;top:403.8px;font-size:8px;line-height:8px;font-weight:700;color:#2f70c8;">A</span>
<span class="t " id="t93" style="left:791.6px;top:404px;font-size:11px;line-height:11px;color:#222;letter-spacing:-0.161px;">Poznámka #1</span>
<div style="left:965px;top:175px;width:17px;height:453px;background:#e9e9e9;"></div>
<svg style="left:969px;top:180px" width="9" height="6" viewBox="0 0 9 6"><path d="M.6 5.4L4.5 1.4L8.4 5.4" fill="none" stroke="#c6c6c6" stroke-width="1.6"/></svg>
<svg style="left:969px;top:617px" width="9" height="6" viewBox="0 0 9 6"><path d="M.6 .6L4.5 4.6L8.4 .6" fill="none" stroke="#c6c6c6" stroke-width="1.6"/></svg>
<div style="left:755px;top:635px;width:111px;height:32px;background:#0067c0;border:1px solid #0a4f9e;"></div>
<span class="t " id="t94" style="left:788px;top:645px;font-size:13px;line-height:13px;color:#fff;letter-spacing:0.156px;">Prehrať</span>
<div style="left:870px;top:635px;width:111px;height:32px;background:#0067c0;border:1px solid #0a4f9e;"></div>
<span class="t " id="t95" style="left:884px;top:645px;font-size:13px;line-height:13px;color:#fff;letter-spacing:0.020px;">Vložiť ako text</span>
</div></body></html>
